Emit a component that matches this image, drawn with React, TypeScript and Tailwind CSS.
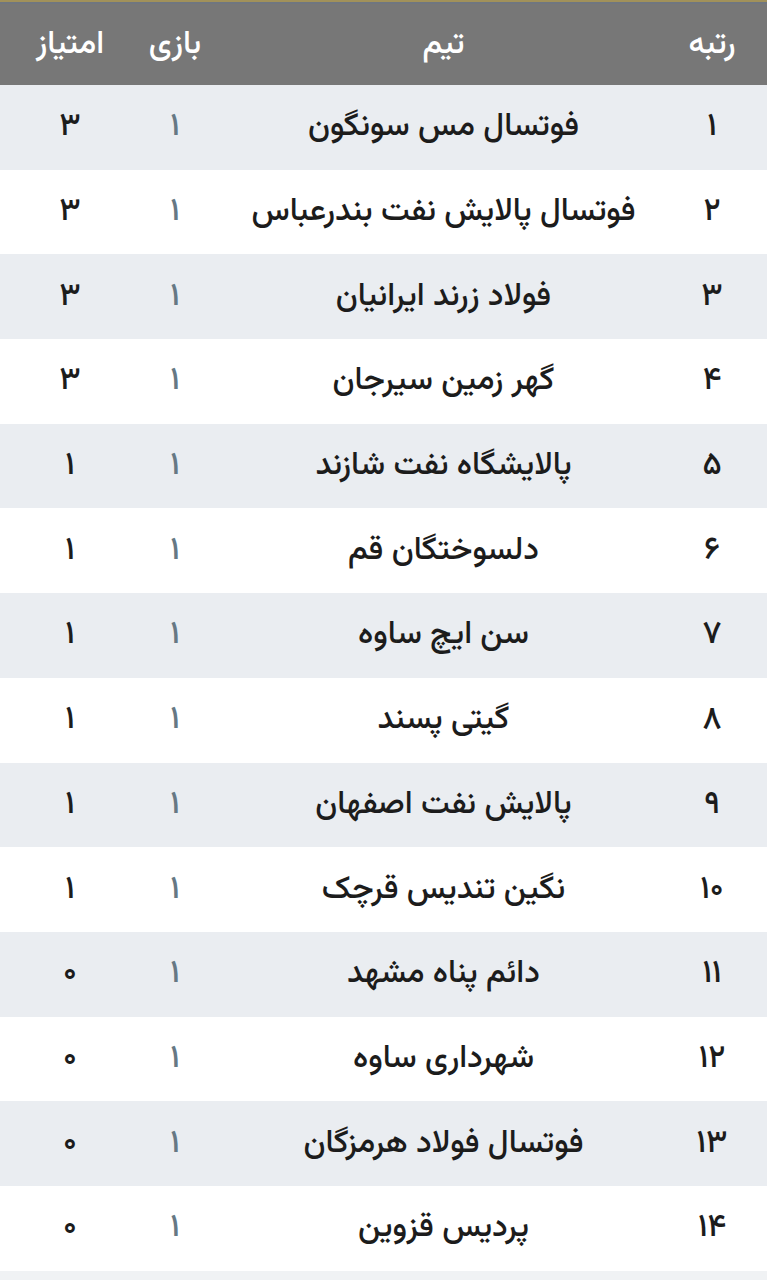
const teams = [
  { rank: "۱", name: "فوتسال مس سونگون", games: "۱", points: "۳" },
  { rank: "۲", name: "فوتسال پالایش نفت بندرعباس", games: "۱", points: "۳" },
  { rank: "۳", name: "فولاد زرند ایرانیان", games: "۱", points: "۳" },
  { rank: "۴", name: "گهر زمین سیرجان", games: "۱", points: "۳" },
  { rank: "۵", name: "پالایشگاه نفت شازند", games: "۱", points: "۱" },
  { rank: "۶", name: "دلسوختگان قم", games: "۱", points: "۱" },
  { rank: "۷", name: "سن ایچ ساوه", games: "۱", points: "۱" },
  { rank: "۸", name: "گیتی پسند", games: "۱", points: "۱" },
  { rank: "۹", name: "پالایش نفت اصفهان", games: "۱", points: "۱" },
  { rank: "۱۰", name: "نگین تندیس قرچک", games: "۱", points: "۱" },
  { rank: "۱۱", name: "دائم پناه مشهد", games: "۱", points: "۰" },
  { rank: "۱۲", name: "شهرداری ساوه", games: "۱", points: "۰" },
  { rank: "۱۳", name: "فوتسال فولاد هرمزگان", games: "۱", points: "۰" },
  { rank: "۱۴", name: "پردیس قزوین", games: "۱", points: "۰" },
];

const font = "font-['Vazirmatn','Noto_Sans_Arabic','DejaVu_Sans',sans-serif]";

export default function App() {
  return (
    <div dir="rtl" className={`w-[767px] h-[1280px] bg-[#f0f2f4] ${font}`}>
      <div className="h-[2px] bg-[#a1915a]" />
      <div className="h-[2px] bg-[#6f7680]" />
      <div className="grid grid-cols-[110px_1fr_70px_140px] h-[81px] items-center bg-[#777777] text-white text-[32px] font-medium">
        <div className="text-center">رتبه</div>
        <div className="text-center pl-5">تیم</div>
        <div className="text-center">بازی</div>
        <div className="text-center">امتیاز</div>
      </div>
      {teams.map((t, i) => (
        <div
          key={t.rank}
          className={`grid grid-cols-[110px_1fr_70px_140px] h-[84.7px] items-center text-[32px] font-medium text-[#1c1c1c] ${
            i % 2 === 0 ? "bg-[#eaedf1]" : "bg-white"
          }`}
        >
          <div className="text-center">{t.rank}</div>
          <div className="text-center pl-5 whitespace-nowrap">{t.name}</div>
          <div className="text-center text-[#667884]">{t.games}</div>
          <div className="text-center">{t.points}</div>
        </div>
      ))}
    </div>
  );
}
